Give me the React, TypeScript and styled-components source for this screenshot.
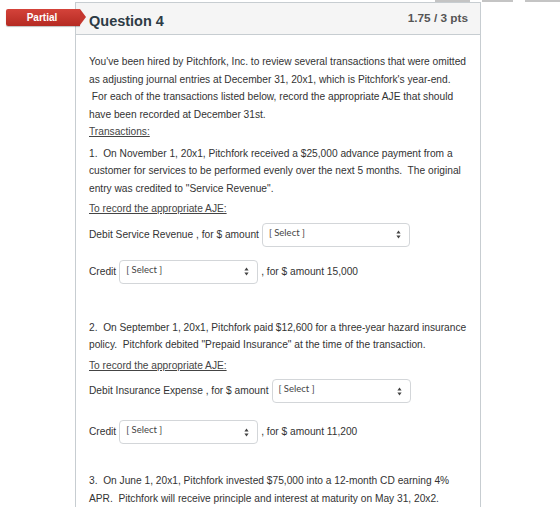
import React from "react";
import styled, { createGlobalStyle } from "styled-components";

const Global = createGlobalStyle`
  html, body { margin: 0; padding: 0; background: #fff; }
  body { font-family: "Liberation Sans", Arial, sans-serif; color: #2d3b45; }
`;

const Page = styled.div`
  width: 560px;
  height: 509px;
  overflow: hidden;
`;

const TopLinks = styled.div`
  display: flex;
  justify-content: flex-end;
  gap: 12px;
  height: 2px;
`;

const TopLink = styled.span<{ $w: number }>`
  display: block;
  width: ${(p) => p.$w}px;
  height: 2px;
  background: #c4c4c4;
`;

const Card = styled.div`
  margin-left: 75px;
  width: 404px;
  border: 1px solid #c7cdd1;
  border-bottom: none;
`;

const Header = styled.div`
  display: flex;
  align-items: center;
  justify-content: space-between;
  height: 31px;
  padding: 0 12px 0 13px;
  background: #f5f5f5;
  border-bottom: 1px solid #c7cdd1;
  position: relative;
`;

const Title = styled.span`
  font-size: 14.5px;
  font-weight: 700;
  color: #2d3b45;
  margin-top: 4px;
`;

const Points = styled.span`
  font-size: 11.8px;
  font-weight: 700;
  color: #555;
  margin-top: -2px;
`;

const Badge = styled.div`
  position: absolute;
  left: -70px;
  top: 6px;
  width: 74px;
  height: 17px;
  display: flex;
  align-items: center;
  justify-content: center;
  padding-right: 2px;
  box-sizing: border-box;
  color: #fff;
  font-size: 10px;
  font-weight: 700;
  background: linear-gradient(#d4433a, #b52a22);
  border-radius: 2px 0 0 2px;
  box-shadow: 0 1px 1px rgba(0, 0, 0, 0.25);
  &::after {
    content: "";
    position: absolute;
    right: -6px;
    top: 0;
    border-top: 8.5px solid transparent;
    border-bottom: 8.5px solid transparent;
    border-left: 6px solid #c5372f;
  }
`;

const Body = styled.div`
  padding: 18px 13px 0 13px;
  font-size: 10.2px;
  line-height: 17.5px;
  color: #333;
`;

const Para = styled.p<{ $gap?: number }>`
  margin: 0 0 ${(p) => p.$gap ?? 4}px 0;
`;

const Under = styled.span`
  text-decoration: underline;
  color: #444;
`;

const Row = styled.div<{ $gap?: number }>`
  display: flex;
  align-items: center;
  gap: 3px;
  height: 24px;
  margin-bottom: ${(p) => p.$gap ?? 13}px;
`;

const Spacer = styled.div<{ $h: number }>`
  height: ${(p) => p.$h}px;
`;

const SelectBox = styled.div<{ $w: number }>`
  display: flex;
  align-items: center;
  justify-content: space-between;
  width: ${(p) => p.$w}px;
  height: 24px;
  box-sizing: border-box;
  padding: 0 8px 4px 6px;
  border: 1px solid #d3d6d9;
  border-radius: 4px;
  background: #fff;
  font-family: Lato, "Open Sans", sans-serif;
  font-size: 9.5px;
  color: #444;
`;

const Arrows = () => (
  <svg width="5" height="9" viewBox="0 0 5 9" style={{ marginTop: 4 }}>
    <path d="M2.5 0.5 L4.6 3.6 L0.4 3.6 Z" fill="#444" />
    <path d="M2.5 8.5 L4.6 5.4 L0.4 5.4 Z" fill="#444" />
  </svg>
);

const Select = ({ w }: { w: number }) => (
  <SelectBox $w={w}>
    <span>[ Select ]</span>
    <Arrows />
  </SelectBox>
);

export default function App() {
  return (
    <Page>
      <Global />
      <TopLinks>
        <TopLink $w={35} />
        <TopLink $w={31} />
        <TopLink $w={35} />
      </TopLinks>
      <Card>
        <Header>
          <Badge>Partial</Badge>
          <Title>Question 4</Title>
          <Points>1.75 / 3 pts</Points>
        </Header>
        <Body>
          <Para $gap={0}>
            You've been hired by Pitchfork, Inc. to review several transactions that were omitted
            as adjusting journal entries at December 31, 20x1, which is Pitchfork's year-end.
            <br />
            &nbsp;For each of the transactions listed below, record the appropriate AJE that should
            have been recorded at December 31st.
          </Para>
          <Para $gap={4}>
            <Under>Transactions:</Under>
          </Para>
          <Para $gap={3}>
            1.&nbsp; On November 1, 20x1, Pitchfork received a $25,000 advance payment from a
            customer for services to be performed evenly over the next 5 months.&nbsp; The original
            entry was credited to "Service Revenue".
          </Para>
          <Para $gap={5}>
            <Under>To record the appropriate AJE:</Under>
          </Para>
          <Row $gap={13}>
            <span>Debit Service Revenue , for $ amount</span>
            <Select w={148} />
          </Row>
          <Row $gap={0}>
            <span>Credit</span>
            <Select w={139} />
            <span>, for $ amount 15,000</span>
          </Row>
          <Spacer $h={35} />
          <Para $gap={3}>
            2.&nbsp; On September 1, 20x1, Pitchfork paid $12,600 for a three-year hazard insurance
            policy.&nbsp; Pitchfork debited "Prepaid Insurance" at the time of the transaction.
          </Para>
          <Para $gap={5}>
            <Under>To record the appropriate AJE:</Under>
          </Para>
          <Row $gap={17}>
            <span>Debit Insurance Expense , for $ amount</span>
            <Select w={139} />
          </Row>
          <Row $gap={0}>
            <span>Credit</span>
            <Select w={139} />
            <span>, for $ amount 11,200</span>
          </Row>
          <Spacer $h={28} />
          <Para>
            3.&nbsp; On June 1, 20x1, Pitchfork invested $75,000 into a 12-month CD earning 4%
            APR.&nbsp; Pitchfork will receive principle and interest at maturity on May 31, 20x2.
          </Para>
        </Body>
      </Card>
    </Page>
  );
}
